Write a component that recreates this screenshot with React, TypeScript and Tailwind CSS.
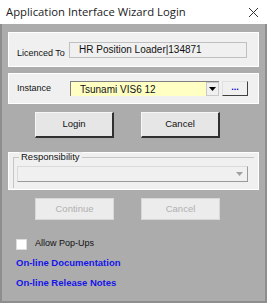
import React from 'react';

const font = { fontFamily: '"Liberation Sans", Arial, sans-serif' };

function Btn({ label, disabled }: { label: string; disabled?: boolean }) {
  return (
    <div
      className={`w-[79px] flex items-center justify-center border ${
        disabled
          ? 'h-[22px] bg-[#ececec] border-[#d8d8d8] text-[#b0b0b0]'
          : 'h-[26px] bg-[#e6e6e6] border-t-[#f6f6f6] border-l-[#f6f6f6] border-b-[#303030] border-r-[#303030] border-b-2 border-r-2 text-[#111]'
      } text-[9.5px]`}
    >
      {label}
    </div>
  );
}

export default function App() {
  return (
    <div className="w-[267px] h-[303px] bg-[#acacac] border-x-[2px] border-b-[2px] border-[#8e8e8e] flex flex-col" style={font}>
      <div className="h-[24px] bg-white flex items-center justify-between pl-[6px] pr-[8px] shrink-0 -mx-[2px]">
        <span className="text-[11.3px] text-[#222]" style={{ fontFamily: '"Open Sans", sans-serif' }}>Application Interface Wizard Login</span>
        <svg width="11" height="11" viewBox="0 0 11 11"><path d="M1 1L10 10M10 1L1 10" stroke="#333" strokeWidth="1" /></svg>
      </div>

      <div className="px-[6px] flex flex-col">
        {/* Licenced To */}
        <div className="mt-[8px] h-[35px] bg-[#f0f0f0] border border-white flex items-center pl-[8px]">
          <span className="text-[9px] text-[#111] w-[52px] mt-[8px] whitespace-nowrap">Licenced To</span>
          <div className="w-[178px] h-[16px] border border-[#c0c0c0] bg-[#f0f0f0] flex items-center pl-[9px] text-[10px] text-[#111]">
            HR Position Loader|134871
          </div>
        </div>

        {/* Instance */}
        <div className="mt-[6px] h-[31px] bg-[#f0f0f0] border border-white flex items-center pl-[8px]">
          <span className="text-[9px] text-[#111] w-[53px]">Instance</span>
          <div className="w-[149px] h-[15px] bg-[#ffffc4] border-l border-t border-[#808080] flex items-center">
            <span className="flex-1 pl-[9px] text-[10px] text-[#111]">Tsunami VIS6 12</span>
            <div className="w-[13px] h-full bg-[#f0f0f0] border border-[#c8c8c8] flex items-center justify-center">
              <svg width="7" height="4" viewBox="0 0 7 4"><path d="M0 0H7L3.5 4Z" fill="#000" /></svg>
            </div>
          </div>
          <div className="ml-[3px] w-[26px] h-[15px] bg-[#f0f0f0] border border-[#e0e0e0] border-b-[#404040] border-r-[#404040] flex items-center justify-center text-[#0000cc] text-[9px] font-bold leading-none pb-[3px]">
            ...
          </div>
        </div>

        {/* Login / Cancel */}
        <div className="mt-[8px] flex gap-[27px] pl-[27px]">
          <Btn label="Login" />
          <Btn label="Cancel" />
        </div>

        {/* Responsibility */}
        <div className="mt-[14px] h-[38px] bg-[#f0f0f0] border border-white px-[4px] pt-[4px]">
          <div className="relative h-[31px] border-l border-t border-[#c6c6c6] pl-[3px] pt-[8px]">
            <span className="absolute left-[5px] -top-[6px] bg-[#f0f0f0] px-[2px] text-[9.5px] text-[#111] leading-none">Responsibility</span>
            <div className="w-[231px] h-[16px] border border-[#9a9a9a] border-t-[#dadada] border-l-[#dadada] bg-[#f0f0f0] flex justify-end items-center pr-[4px]">
              <svg width="7" height="4" viewBox="0 0 7 4"><path d="M0 0H7L3.5 4Z" fill="#a0a0a0" /></svg>
            </div>
          </div>
        </div>

        <div className="mt-[8px] flex gap-[27px] pl-[27px]">
          <Btn label="Continue" disabled />
          <Btn label="Cancel" disabled />
        </div>

        <div className="mt-[18px] h-[12px] flex items-center pl-[8px]">
          <div className="w-[11px] h-[11px] bg-white border border-[#dcdcdc]" />
          <span className="ml-[8px] text-[9px] text-[#111]">Allow Pop-Ups</span>
        </div>
        <div className="mt-[3px] pl-[8px] text-[9.5px] leading-[20px] font-bold text-[#1515e8]">On-line Documentation</div>
        <div className="pl-[8px] text-[9.5px] leading-[20px] font-bold text-[#1515e8]">On-line Release Notes</div>
      </div>
    </div>
  );
}
